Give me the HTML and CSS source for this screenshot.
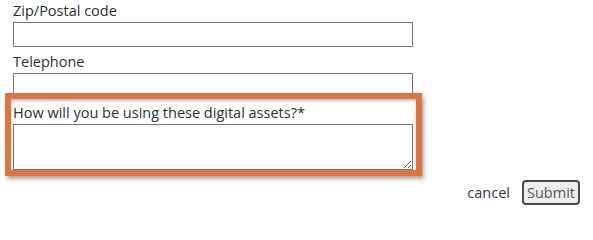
FILE: index.html
```html
<!DOCTYPE html>
<html lang="en">
<head>
<meta charset="utf-8">
<title>Form</title>
<link rel="stylesheet" href="styles.css">
</head>
<body>
<form class="form">
  <div class="field">
    <label class="label" for="zip">Zip/Postal code</label>
    <input class="input" id="zip" type="text">
  </div>
  <div class="field">
    <label class="label" for="tel">Telephone</label>
    <input class="input" id="tel" type="text">
  </div>
  <div class="field field-highlight">
    <label class="label" for="use">How will you be using these digital assets?*</label>
    <textarea class="textarea" id="use"></textarea>
  </div>
  <div class="actions">
    <a class="cancel" href="#">cancel</a>
    <button class="submit" type="button">Submit</button>
  </div>
</form>
</body>
</html>
```
FILE: styles.css
```css
html, body {
  margin: 0;
  padding: 0;
  background: #ffffff;
}

body {
  font-family: "Open Sans", "DejaVu Sans", sans-serif;
  font-size: 14.5px;
  color: #2b2f36;
}

.form {
  padding: 1px 13px 0 13px;
  display: flex;
  flex-direction: column;
  gap: 5px;
}

.field {
  display: flex;
  flex-direction: column;
  gap: 2px;
  width: 400px;
}

.label {
  display: block;
  font-size: 14.5px;
  line-height: 19px;
  font-weight: 500;
  color: #2b2f36;
}

.input {
  box-sizing: border-box;
  width: 400px;
  height: 25px;
  margin: 0;
  border: 1px solid #767676;
  border-radius: 0;
  padding: 0 4px;
  font-family: inherit;
  font-size: 14px;
  background: #ffffff;
}

.textarea {
  box-sizing: border-box;
  width: 400px;
  height: 46px;
  margin: 0;
  border: 1px solid #767676;
  border-radius: 0;
  padding: 2px 4px;
  font-family: inherit;
  font-size: 14px;
  background: #ffffff;
  display: block;
}

.field-highlight {
  position: relative;
  z-index: 0;
}

.field-highlight::before {
  content: "";
  position: absolute;
  top: -10px;
  left: -8px;
  right: -9px;
  bottom: -6px;
  border: 6px solid #e07441;
  background: #ffffff;
  box-shadow: 2px 3px 4px rgba(0, 0, 0, 0.35), inset 0 2px 3px rgba(0, 0, 0, 0.25);
  z-index: -1;
}

.actions {
  display: flex;
  justify-content: flex-end;
  align-items: center;
  gap: 12px;
  margin-top: 5px;
}

.cancel {
  color: #333a48;
  text-decoration: none;
  font-size: 14.5px;
  line-height: 19px;
}

.submit {
  box-sizing: border-box;
  height: 25px;
  width: 58px;
  padding: 0;
  margin: 0;
  border: 2px solid #4a4a4a;
  border-radius: 4px;
  background: #efefef;
  color: #555555;
  font-family: inherit;
  font-size: 14.5px;
  line-height: 19px;
}
```
